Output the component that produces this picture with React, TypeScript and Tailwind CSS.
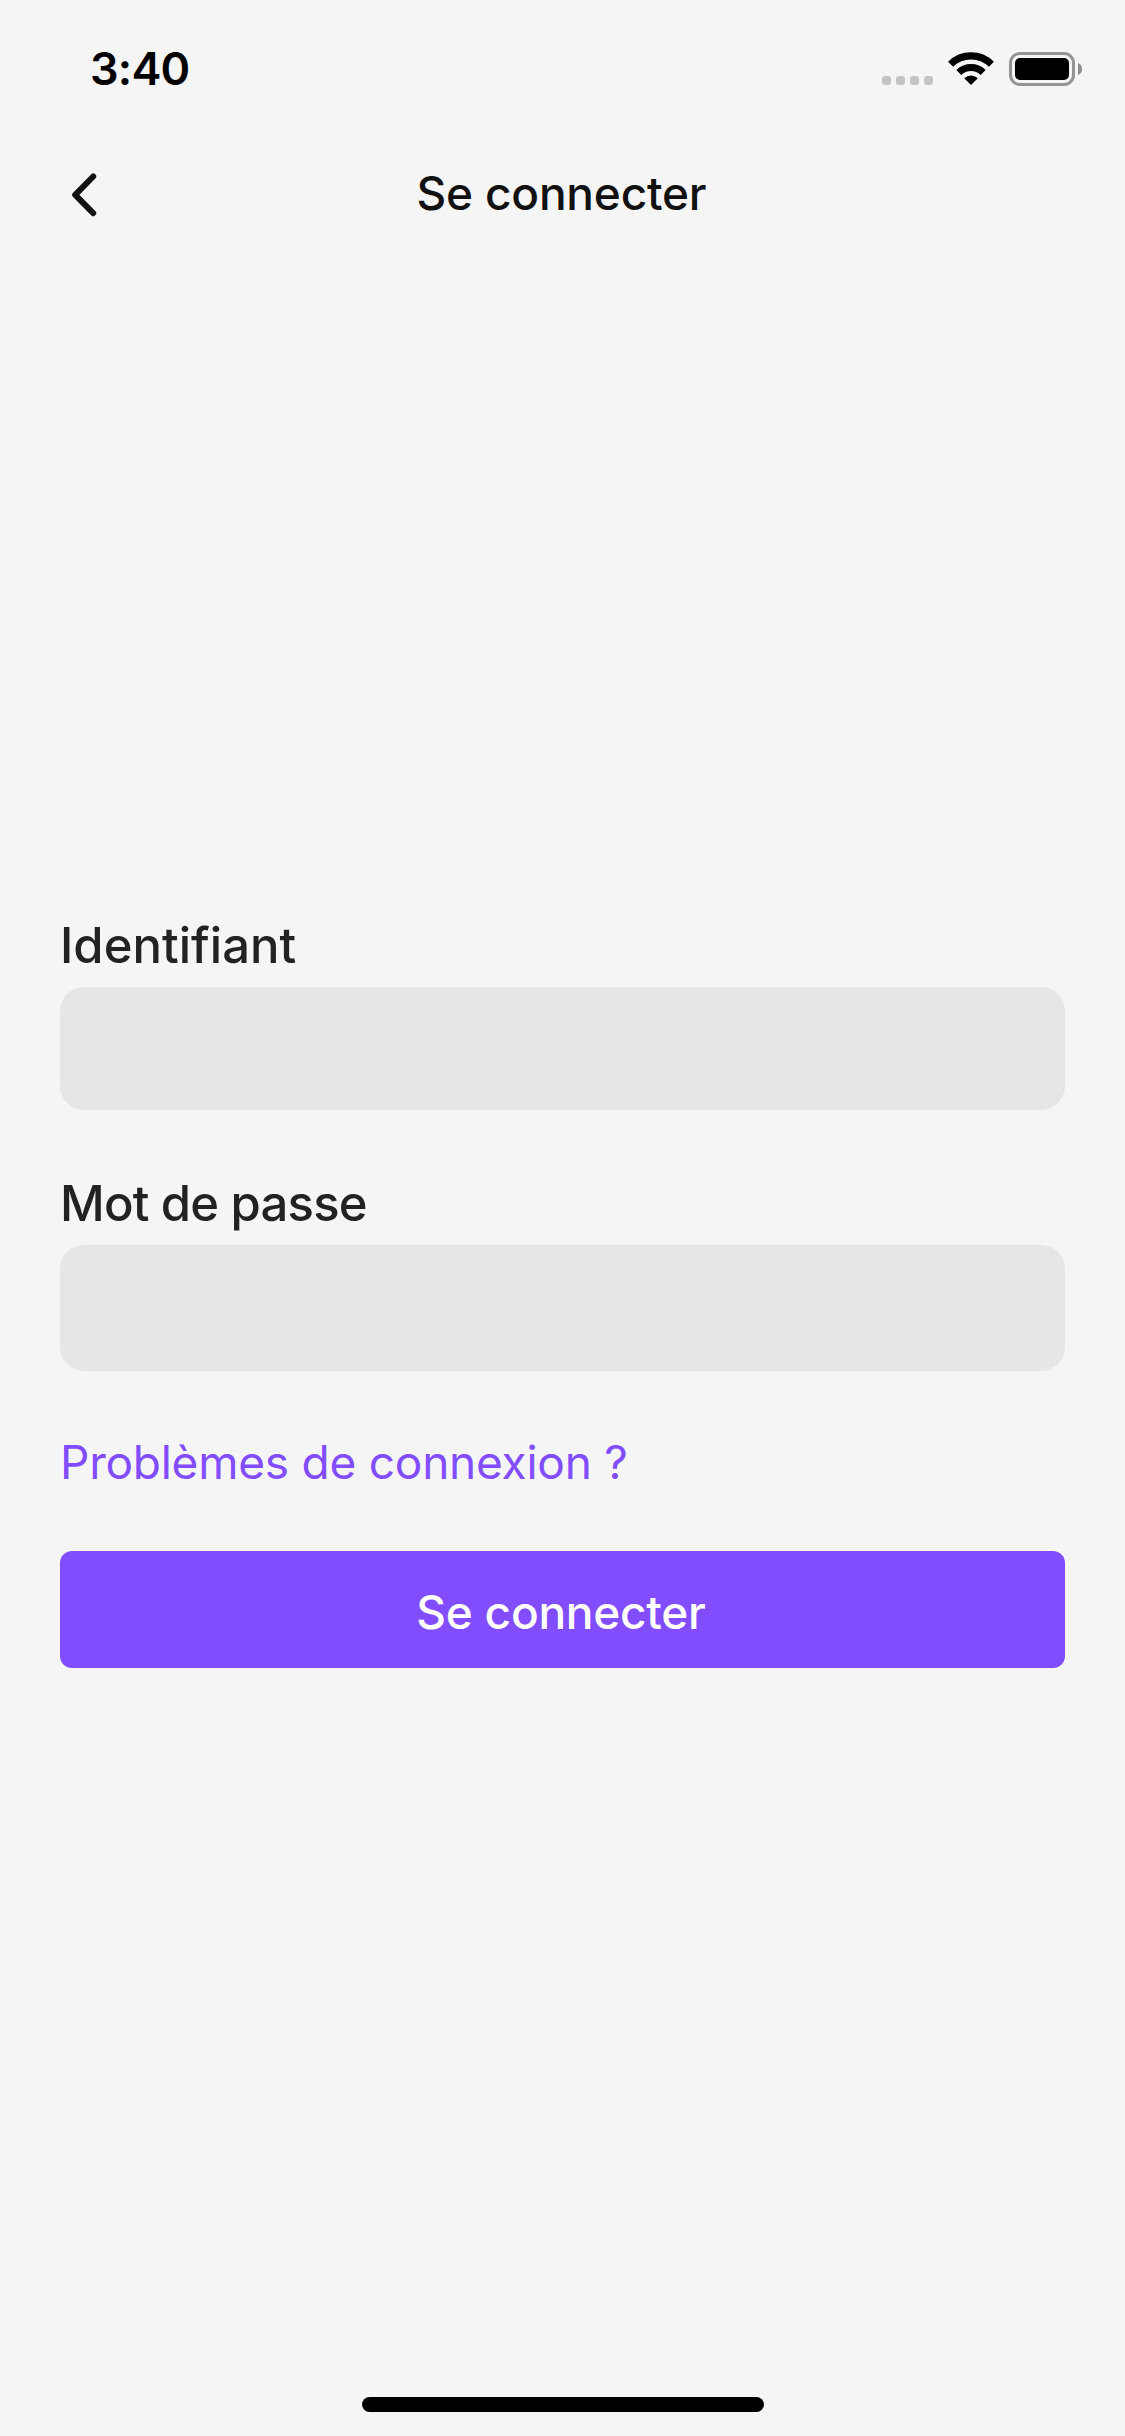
function StatusBar() {
  return (
    <header className="flex h-[138px] items-start justify-between pl-[90px] pr-[43px]">
      <time className="mt-[42px] text-[45px] font-semibold leading-[54px] tracking-[-0.8px] text-black">3:40</time>
      <div className="mt-[52px] flex h-[34px] items-start">
        <div className="mt-6 flex gap-[5px]">
          {[0, 1, 2, 3].map((i) => (
            <span key={i} className="size-[9px] rounded-[3px] bg-[#c4c4c4]" />
          ))}
        </div>
        <svg className="ml-[15px]" width="46" height="34" viewBox="0 0 46 34" fill="none">
          <path d="M2.6 12.2A29 29 0 0 1 43.4 12.2" stroke="#000" strokeWidth="7.2" />
          <path d="M10.8 20.4A17.4 17.4 0 0 1 35.2 20.4" stroke="#000" strokeWidth="7" />
          <path d="M16.2 26.2A10 10 0 0 1 29.8 26.2L23 33Z" fill="#000" />
        </svg>
        <svg className="ml-[15px]" width="73" height="34" viewBox="0 0 73 34" fill="none">
          <rect x="1.5" y="1.5" width="63" height="31" rx="9.5" stroke="#949494" strokeWidth="3" />
          <rect x="6" y="6" width="54" height="22" rx="5" fill="#000" />
          <path d="M69 11C71.5 12 73 14.3 73 17S71.5 22 69 23Z" fill="#8c8c8c" />
        </svg>
      </div>
    </header>
  );
}

function Field({ id, label, type, inputClass }: { id: string; label: string; type: string; inputClass: string }) {
  return (
    <div className="flex flex-col">
      <label htmlFor={id} className="h-[71px] text-[49px] font-[450] leading-[60px] text-[#222222]">
        {label}
      </label>
      <input id={id} type={type} className={"w-full rounded-3xl bg-[#e6e6e6] px-6 text-[45px] outline-none " + inputClass} />
    </div>
  );
}

export default function App() {
  return (
    <main className="flex h-[2436px] w-[1125px] flex-col bg-[#f5f5f5] font-['Inter',sans-serif]">
      <StatusBar />
      <nav className="grid h-[114px] grid-cols-[1fr_auto_1fr] items-center">
        <button aria-label="Retour" className="ml-[70px] w-[30px]">
          <svg width="30" height="48" viewBox="0 0 30 48" fill="none" stroke="#111" strokeWidth="6" strokeLinecap="round" strokeLinejoin="round">
            <path d="M23.2 5.5L5.2 23.8L23.2 42.2" />
          </svg>
        </button>
        <h1 className="pb-[5px] pr-[2px] text-[46px] font-[450] leading-[54px] tracking-[-0.2px] text-[#111]">Se connecter</h1>
      </nav>
      <form className="mt-[664px] flex flex-col px-[60px]">
        <div className="tracking-[0.02px]">
          <Field id="login" label="Identifiant" type="text" inputClass="h-[123px]" />
        </div>
        <div className="mt-16 tracking-[-0.8px]">
          <Field id="password" label="Mot de passe" type="password" inputClass="h-[126px]" />
        </div>
        <a href="#aide" className="mt-16 self-start text-[46px] leading-[54px] tracking-[-0.24px] text-[#814dff]">
          Problèmes de connexion ?
        </a>
        <button type="button" className="mt-[62px] flex h-[117px] items-center justify-center rounded-xl bg-[#814dff] pr-[3px] pt-[5px] text-[46px] font-medium tracking-[-0.25px] text-white">
          Se connecter
        </button>
      </form>
      <div className="mb-6 mt-auto h-[15px] w-[402px] self-center rounded-full bg-black" />
    </main>
  );
}
